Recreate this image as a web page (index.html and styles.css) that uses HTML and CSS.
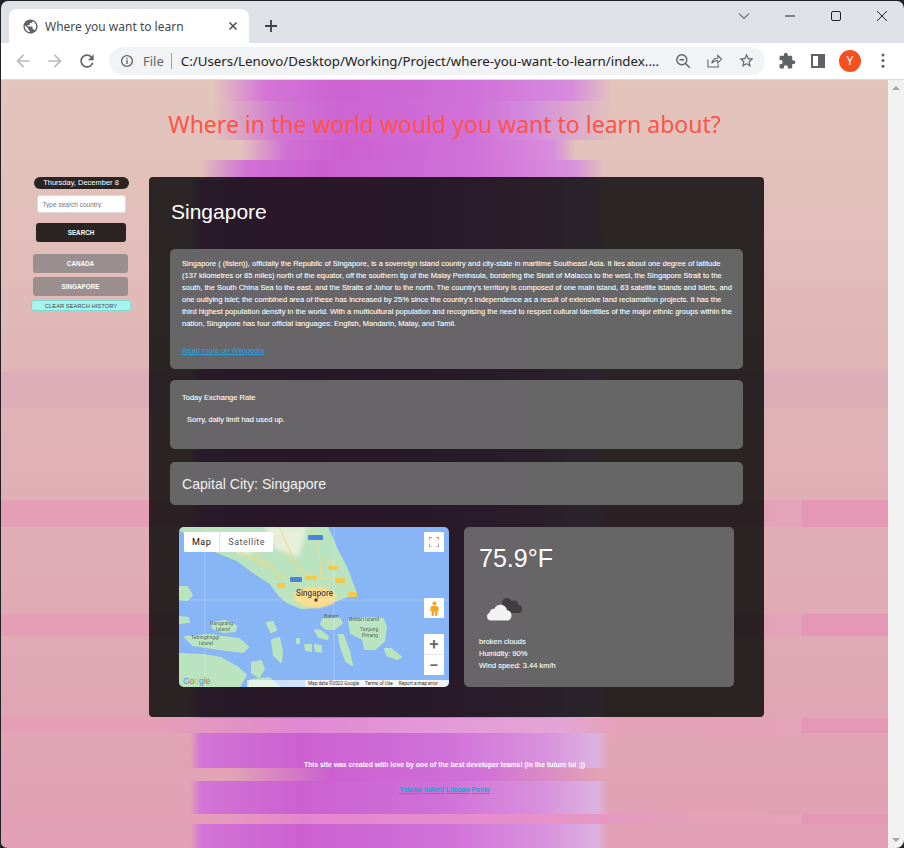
FILE: index.html
```html
<!DOCTYPE html>
<html lang="en">
<head>
    <meta charset="UTF-8">
    <meta name="viewport" content="width=device-width, initial-scale=1.0">
    <title>Where you want to learn</title>
    <link rel="stylesheet" href="styles.css">
</head>
<body>
<div class="window">

    <!-- browser chrome -->
    <div class="tabstrip">
        <div class="tab">
            <svg class="favicon" viewBox="0 0 24 24"><path d="M12 2C6.48 2 2 6.48 2 12s4.48 10 10 10 10-4.48 10-10S17.52 2 12 2zm-1 17.93c-3.95-.49-7-3.85-7-7.93 0-.62.08-1.21.21-1.79L9 15v1c0 1.1.9 2 2 2v1.93zm6.9-2.54c-.26-.81-1-1.39-1.9-1.39h-1v-3c0-.55-.45-1-1-1H8v-2h2c.55 0 1-.45 1-1V7h2c1.1 0 2-.9 2-2v-.41c2.93 1.19 5 4.06 5 7.41 0 2.08-.8 3.97-2.1 5.39z"/></svg>
            <span class="tab-title">Where you want to learn</span>
            <svg class="tab-close" viewBox="0 0 10 10"><path d="M1.5 1.5l7 7M8.5 1.5l-7 7"/></svg>
        </div>
        <svg class="new-tab" viewBox="0 0 12 12"><path d="M6 0v12M0 6h12"/></svg>
        <div class="window-buttons">
            <svg viewBox="0 0 12 12"><path d="M1 3.5l5 5 5-5"/></svg>
            <svg viewBox="0 0 12 12"><path d="M1 6h10"/></svg>
            <svg viewBox="0 0 12 12"><rect x="1.5" y="1.5" width="9" height="9" rx="1.5"/></svg>
            <svg viewBox="0 0 12 12"><path d="M1 1l10 10M11 1L1 11"/></svg>
        </div>
    </div>
    <div class="toolbar">
        <svg class="tool tool-off" viewBox="0 0 24 24"><path d="M20 11H7.83l5.59-5.59L12 4l-8 8 8 8 1.41-1.41L7.83 13H20v-2z"/></svg>
        <svg class="tool tool-off" viewBox="0 0 24 24"><path d="M12 4l-1.41 1.41L16.17 11H4v2h12.17l-5.58 5.59L12 20l8-8z"/></svg>
        <svg class="tool" viewBox="0 0 24 24"><path d="M17.65 6.35A7.958 7.958 0 0 0 12 4c-4.42 0-7.99 3.58-7.99 8s3.57 8 7.99 8c3.73 0 6.84-2.55 7.73-6h-2.08A5.99 5.99 0 0 1 12 18c-3.31 0-6-2.69-6-6s2.69-6 6-6c1.66 0 3.14.69 4.22 1.78L13 11h7V4l-2.35 2.35z"/></svg>
        <div class="omnibox">
            <svg class="omni-icon" viewBox="0 0 16 16"><circle cx="8" cy="8" r="6.2" fill="none" stroke="#5f6368" stroke-width="1.5"/><rect x="7.2" y="7" width="1.6" height="4.4"/><rect x="7.2" y="4.5" width="1.6" height="1.6"/></svg>
            <span class="omni-file">File</span>
            <span class="omni-sep"></span>
            <span class="omni-url">C:/Users/Lenovo/Desktop/Working/Project/where-you-want-to-learn/index....</span>
            <svg class="omni-icon omni-zoom" viewBox="0 0 16 16"><circle cx="6.8" cy="6.8" r="5" fill="none" stroke="#5f6368" stroke-width="1.4"/><path d="M10.5 10.5l4.3 4.3M4.5 6.8h4.6" fill="none" stroke="#5f6368" stroke-width="1.4"/></svg>
            <svg class="omni-icon omni-share" viewBox="0 0 16 16"><path d="M1 7v8h11v-3M5 11c.5-3.500 3-5.500 6.500-5.500V2.500l4 4.200-4 4V8C8.500 8 6.500 9 5 11z" fill="none" stroke="#5f6368" stroke-width="1.100"/></svg>
            <svg class="omni-icon omni-star" viewBox="0 0 24 24"><path d="M22 9.24l-7.19-.62L12 2 9.19 8.63 2 9.24l5.46 4.73L5.82 21 12 17.27 18.18 21l-1.63-7.03L22 9.24zM12 15.4l-3.76 2.27 1-4.28-3.32-2.88 4.38-.38L12 6.1l1.71 4.04 4.38.38-3.32 2.88 1 4.28L12 15.4z"/></svg>
        </div>
        <svg class="tool tool-puzzle" viewBox="0 0 24 24"><path d="M20.5 11H19V7c0-1.100-.9-2-2-2h-4V3.500C13 2.120 11.880 1 10.500 1S8 2.120 8 3.500V5H4c-1.100 0-1.990.9-1.990 2v3.800H3.500c1.490 0 2.700 1.210 2.700 2.700s-1.210 2.700-2.700 2.700H2V20c0 1.100.9 2 2 2h3.800v-1.500c0-1.490 1.210-2.700 2.700-2.700 1.490 0 2.700 1.210 2.700 2.700V22H17c1.100 0 2-.9 2-2v-4h1.500c1.380 0 2.500-1.120 2.500-2.500S21.880 11 20.500 11z"/></svg>
        <svg class="tool tool-panel" viewBox="0 0 14 14"><path fill-rule="evenodd" d="M0 0h14v14H0zM2 2v10h5V2z"/></svg>
        <span class="avatar">Y</span>
        <svg class="tool tool-menu" viewBox="0 0 4 16"><circle cx="2" cy="2" r="1.600"/><circle cx="2" cy="8" r="1.600"/><circle cx="2" cy="14" r="1.600"/></svg>
    </div>

    <div class="viewport">
        <div class="page">
            <h1 class="page-title">Where in the world would you want to learn about?</h1>

            <div class="layout">
                <aside class="sidebar">
                    <div class="date-pill">Thursday, December 8</div>
                    <input class="search-input" type="text" placeholder="Type search country:">
                    <button class="btn btn-search">SEARCH</button>
                    <button class="btn btn-history btn-canada">CANADA</button>
                    <button class="btn btn-history">SINGAPORE</button>
                    <button class="btn btn-clear">CLEAR SEARCH HISTORY</button>
                </aside>

                <main class="panel">
                    <h2 class="country-name">Singapore</h2>

                    <section class="card card-summary">
                        <p>Singapore ( (listen)), officially the Republic of Singapore, is a sovereign island country and city-state in maritime Southeast Asia. It lies about one degree of latitude (137 kilometres or 85 miles) north of the equator, off the southern tip of the Malay Peninsula, bordering the Strait of Malacca to the west, the Singapore Strait to the south, the South China Sea to the east, and the Straits of Johor to the north. The country's territory is composed of one main island, 63 satellite islands and islets, and one outlying islet; the combined area of these has increased by 25% since the country's independence as a result of extensive land reclamation projects. It has the third highest population density in the world. With a multicultural population and recognising the need to respect cultural identities of the major ethnic groups within the nation, Singapore has four official languages: English, Mandarin, Malay, and Tamil.</p>
                        <a class="wiki-link" href="#">Read more on Wikipedia</a>
                    </section>

                    <section class="card card-rate">
                        <div class="rate-title">Today Exchange Rate</div>
                        <div class="rate-text">Sorry, daily limit had used up.</div>
                    </section>

                    <section class="card card-capital">Capital City: Singapore</section>

                    <div class="info-row">
                        <div class="map">
                            <svg class="map-art" viewBox="0 0 270 160">
                                <rect width="270" height="160" fill="#87b5f6"/>
                                <g class="land">
                                    <path d="M0 0V2L6 6 20 15 38 25 58 33 74 45 91 56 100 68 108 75 122 81 140 80 158 73 177 66 171 50 165 36 158 23 148 0z"/>
                                    <path d="M0 60L8 60 13 68 8 73 0 72z"/>
                                    <path d="M0 90L9 91 10 95 0 96z"/>
                                    <path d="M33 96L46 94 57 99 56 104 44 105 34 101z"/>
                                    <path d="M6 110L30 108 60 112 69 120 64 125 40 122 14 118z"/>
                                    <path d="M0 127L24 128 42 131 58 140 67 148 60 160H0z"/>
                                    <path d="M73 136L82 134 85 142 80 150 73 146z"/>
                                    <path d="M72 153L90 151 100 160H70z"/>
                                    <path d="M88 96L94 95 97 103 92 105z"/>
                                    <path d="M93 113L100 111 103 124 102 135 95 128z"/>
                                    <path d="M126 118L132 118 132 124 127 123z"/>
                                    <path d="M136 118L142 119 142 125 137 124z"/>
                                    <path d="M136 103L142 104 149 110 148 112 140 110z"/>
                                    <path d="M160 108L164 108 170 124 173 138 167 134 162 120z"/>
                                    <path d="M144 92L160 91 163 96 155 102 147 102 142 97z"/>
                                    <path d="M170 94L186 91 204 92 207 100 205 114 196 122 186 122 184 112 172 106z"/>
                                    <path d="M206 122L212 122 222 130 218 132 208 128z"/>
                                    <path d="M118 112L120 112 120 116 118 116z"/>
                                </g>
                                <g class="urban">
                                    <path d="M30 6L60 8 76 28 60 26z"/>
                                    <path d="M86 0H128L120 30 96 22z"/>
                                </g>
                                <path d="M114 66L128 60 146 60 158 68 154 77 140 81 124 79 116 74z" fill="#fbdc8d" class="city-area"/>
                                <g class="roads">
                                    <path d="M26 0L44 14 66 28 90 36 108 52 122 60"/>
                                    <path d="M100 0L112 26 122 44 142 52 156 52 170 58"/>
                                    <path d="M66 28L98 46 104 62"/>
                                    <path d="M142 52L140 22 132 0"/>
                                    <path d="M142 30L160 40"/>
                                    <path d="M86 40L74 18M120 44L104 24"/>
                                </g>
                                <path d="M0 73H270M26 0V160M155 0V160" stroke="#fff" stroke-opacity=".35" stroke-width=".7"/>
                                <rect x="129" y="8" width="15" height="5" rx="1" fill="#4a86d8"/>
                                <rect x="111" y="50" width="12" height="5" rx="1" fill="#4a86d8"/>
                                <rect x="98" y="56" width="8" height="5" rx="1" fill="#f2c94c"/>
                                <rect x="156" y="51" width="10" height="5" rx="1" fill="#f2c94c"/>
                                <rect x="149" y="39" width="10" height="4" rx="1" fill="#f2c94c"/>
                                <rect x="169" y="65" width="9" height="5" rx="1" fill="#f2c94c"/>
                                <rect x="126" y="49" width="12" height="4" rx="1" fill="#f2c94c"/>
                                <g class="map-labels">
                                    <text class="map-city" x="117" y="69">Singapore</text>
                                    <text class="map-place" x="31" y="98">Rangsang</text>
                                    <text class="map-place" x="37" y="104">Island</text>
                                    <text class="map-place" x="12" y="112">Tebingtinggi</text>
                                    <text class="map-place" x="20" y="118">Island</text>
                                    <text class="map-place" x="145" y="91">Batam</text>
                                    <text class="map-place" x="170" y="94">Bintan Island</text>
                                    <text class="map-place" x="181" y="104">Tanjung</text>
                                    <text class="map-place" x="183" y="110">Pinang</text>
                                </g>
                                <circle cx="137" cy="73" r="1.800" fill="#444"/>
                            </svg>
                            <div class="map-type">
                                <span class="map-type-on">Map</span>
                                <span>Satellite</span>
                            </div>
                            <div class="map-btn map-full">
                                <svg viewBox="0 0 12 12"><path d="M0 3.500V0h3.500M8.500 0H12v3.500M12 8.500V12H8.500M3.500 12H0V8.500"/></svg>
                            </div>
                            <div class="map-btn map-peg">
                                <svg viewBox="0 0 10 16"><circle cx="5" cy="2.500" r="2.300"/><path d="M2 5.200h6l1.500 1.500v4.300H8.200V16H5.500v-4.500h-1V16H1.800v-5H.5V6.700z"/></svg>
                            </div>
                            <div class="map-zoom">
                                <span>+</span>
                                <span>−</span>
                            </div>
                            <div class="map-logo"><b class="g-blue">G</b><b class="g-red">o</b><b class="g-yellow">o</b><b class="g-blue">g</b><b class="g-green">l</b><b class="g-red">e</b></div>
                            <div class="map-attr">
                                <span class="attr-fill"></span>
                                <span class="attr-text">Map data ©2022 Google</span>
                                <span class="attr-text">Terms of Use</span>
                                <span class="attr-text">Report a map error</span>
                            </div>
                        </div>

                        <div class="card-weather">
                            <div class="temp">75.9°F</div>
                            <svg class="weather-icon" viewBox="0 0 36 24">
                                <g fill="#3f3d3e"><circle cx="20" cy="6" r="5"/><circle cx="27" cy="8" r="4.500"/><circle cx="31" cy="12" r="4"/><rect x="20" y="8" width="12" height="8"/></g>
                                <path fill="#f2f2f2" d="M4 23.500a4 4 0 0 1-1.500-7.700c.3-2.600 2.500-4.300 5-4 1-2.500 3-4 6-4 3.500 0 6 2.400 6.300 5.500 2.400 0 4.700 1.700 4.700 5.200 0 2.700-1.500 5-4 5z"/>
                            </svg>
                            <div class="weather-text">broken clouds</div>
                            <div class="weather-text">Humidity: 90%</div>
                            <div class="weather-text">Wind speed: 3.44 km/h</div>
                        </div>
                    </div>
                </main>
            </div>

            <footer class="site-footer">
                <p>This site was created with love by one of the best developer teams! (in the future lol ;))</p>
                <div class="team-links">
                    <a href="#">Yalzaw</a>
                    <a href="#">Valerii</a>
                    <a href="#">Liibaan</a>
                    <a href="#">Pavlo</a>
                </div>
            </footer>
        </div>

        <div class="scrollbar">
            <span class="arrow-up"></span>
            <span class="arrow-down"></span>
        </div>
    </div>
</div>
</body>
</html>
```

FILE: styles.css
```css
* {
    box-sizing: border-box;
}

html, body {
    margin: 0;
    padding: 0;
    height: 100%;
    overflow: hidden;
    background-color: #202124;
}

body {
    font-family: "Liberation Sans", Arial, sans-serif;
}

.window {
    width: 904px;
    height: 848px;
    padding-left: 1px;
    padding-top: 1px;
    display: flex;
    flex-direction: column;
    overflow: hidden;
    border-radius: 8px;
}

/* browser chrome */
.tabstrip {
    height: 42px;
    background-color: #dee1e6;
    display: flex;
    align-items: flex-end;
    padding-left: 8px;
    border-radius: 7px 7px 0 0;
    flex: none;
}

.tab {
    width: 240px;
    height: 34px;
    background-color: #fff;
    border-radius: 8px 8px 0 0;
    display: flex;
    align-items: center;
    padding: 0 11px 0 13px;
}

.favicon {
    width: 17px;
    height: 17px;
    fill: #5f6368;
    flex: none;
}

.tab-title {
    margin-left: 6px;
    flex: 1;
    font-family: "Noto Sans", sans-serif;
    font-size: 12px;
    color: #45494e;
}

.tab-close {
    width: 10px;
    height: 10px;
    fill: none;
    stroke: #4a4d51;
    stroke-width: 1.500;
}

.new-tab {
    width: 12px;
    height: 12px;
    margin: 0 0 11px 16px;
    fill: none;
    stroke: #3c4043;
    stroke-width: 1.800;
}

.window-buttons {
    margin-left: auto;
    align-self: flex-start;
    display: flex;
    gap: 34px;
    padding: 9px 16px 0 0;
}

.window-buttons svg {
    width: 12px;
    height: 12px;
    fill: none;
    stroke: #202124;
    stroke-width: 1;
}

.toolbar {
    height: 37px;
    background-color: #fff;
    border-bottom: 1px solid #dadce0;
    display: flex;
    align-items: center;
    padding: 0 0 1px 12px;
    flex: none;
}

.tool {
    width: 20px;
    height: 20px;
    fill: #5f6368;
    margin-right: 12px;
    flex: none;
}

.tool-off {
    fill: #babcbe;
}

.omnibox {
    width: 656px;
    height: 28px;
    border-radius: 14px;
    background-color: #f1f3f4;
    display: flex;
    align-items: center;
    padding-left: 11px;
    flex: none;
}

.omni-icon {
    width: 14px;
    height: 14px;
    fill: #5f6368;
    flex: none;
}

.omni-file {
    margin-left: 9px;
    font-family: "Noto Sans", sans-serif;
    font-size: 13px;
    color: #5f6368;
}

.omni-sep {
    width: 1px;
    height: 16px;
    margin: 0 9px 0 7px;
    background-color: #9aa0a6;
}

.omni-url {
    width: 488px;
    font-family: "Noto Sans", sans-serif;
    font-size: 13.300px;
    white-space: nowrap;
    color: #202124;
}

.omni-zoom {
    width: 16px;
    height: 16px;
    margin-left: 6px;
}

.omni-share {
    width: 15px;
    height: 15px;
    margin-left: 16px;
}

.omni-star {
    width: 17px;
    height: 17px;
    margin-left: 16px;
}

.tool-puzzle {
    margin: 0 0 0 13px;
    width: 18px;
    height: 18px;
}

.tool-panel {
    width: 14px;
    height: 14px;
    margin: 0 0 0 15px;
}

.avatar {
    width: 22px;
    height: 22px;
    margin-left: 14px;
    border-radius: 50%;
    background-color: #f4511e;
    color: #fff;
    font-family: "Noto Sans", sans-serif;
    font-size: 12px;
    line-height: 22px;
    text-align: center;
    flex: none;
}

.tool-menu {
    width: 4px;
    height: 15px;
    margin: 0 0 0 20px;
}

/* page */
.viewport {
    flex: 1;
    display: flex;
    min-height: 0;
}

.page {
    width: 887px;
    height: 768px;
    overflow: hidden;
    padding-top: 28px;
    --core: linear-gradient(90deg, rgba(207, 98, 210, 0) 189px, #d274d6 200px, #cc60d0 300px, #d070d8 440px, #d890dc 540px, #dcb2e0 596px, rgba(220, 178, 224, 0) 608px);
    --top-a: linear-gradient(90deg, rgba(207, 98, 210, 0) 212px, #d474d6 265px, #cc62d0 340px, #d070d8 470px, #d68cdc 570px, rgba(220, 190, 220, 0) 612px);
    --top-b: linear-gradient(90deg, rgba(207, 98, 210, 0) 212px, #d078d4 278px, #cc64d2 340px, #d070d8 470px, #d48edc 533px, rgba(220, 190, 220, 0) 612px);
    --top-c: linear-gradient(90deg, rgba(207, 98, 210, 0) 240px, #d070d4 285px, #cc60d0 340px, #d070d8 470px, #d88cdc 552px, rgba(220, 190, 220, 0) 575px);
    --top-d: linear-gradient(90deg, rgba(207, 98, 210, 0) 198px, #d070d4 246px, #cc60d0 320px, #d070d8 470px, #d890dc 572px, rgba(220, 190, 220, 0) 604px);
    --band: linear-gradient(90deg, #e59fb6 0, #e4a2b8 764px, #e2a4ba 800px, #e598b6 801px);
    background:
        var(--top-a) 0 0 / 100% 21px no-repeat,
        var(--top-b) 0 21px / 100% 39px no-repeat,
        var(--top-c) 0 60px / 100% 20px no-repeat,
        var(--top-d) 0 80px / 100% 20px no-repeat,
        var(--core) 0 100px / 100% 538px no-repeat,
        linear-gradient(90deg, rgba(224, 136, 208, 0) 150px, #e088d2 300px, #e498da 420px, #e4a4d4 560px, rgba(228, 160, 190, 0) 620px) 0 638px / 100% 15px no-repeat,
        var(--core) 0 653px / 100% 35px no-repeat,
        linear-gradient(90deg, rgba(207, 98, 210, 0) 230px, #cc60d0 330px, #d070d8 480px, rgba(220, 178, 224, 0) 600px) 0 688px / 100% 13px no-repeat,
        var(--core) 0 701px / 100% 33px no-repeat,
        linear-gradient(90deg, rgba(224, 136, 208, 0) 200px, #e486ce 300px, #e68ece 500px, rgba(228, 156, 184, 0) 700px) 0 734px / 100% 10px no-repeat,
        var(--core) 0 744px / 100% 24px no-repeat,
        var(--band) 0 420px / 100% 27px no-repeat,
        var(--band) 0 534px / 100% 22px no-repeat,
        var(--band) 0 638px / 100% 15px no-repeat,
        var(--band) 0 734px / 100% 10px no-repeat,
        linear-gradient(90deg, #deaeb8, #deaeb8) 0 292px / 100% 36px no-repeat,
        linear-gradient(180deg, #e3c5bc 0, #e2bfba 150px, #e0b4b6 300px, #e0aeb6 450px, #e0a6b4 620px, #e2a0b6 768px);
}

.page-title {
    margin: 0;
    text-align: center;
    font-family: "Noto Sans", sans-serif;
    font-weight: normal;
    font-size: 23px;
    line-height: 32px;
    color: #ff5349;
}

.layout {
    display: flex;
    align-items: flex-start;
    margin-top: 37px;
    padding-left: 30px;
}

.sidebar {
    width: 100px;
    display: flex;
    flex-direction: column;
    align-items: center;
}

.date-pill {
    width: 95px;
    height: 12px;
    border-radius: 6px;
    background-color: #2b2422;
    color: #fff;
    font-size: 7.500px;
    line-height: 12px;
    text-align: center;
}

.search-input {
    width: 89px;
    height: 18px;
    margin-top: 6px;
    padding: 0 5px;
    border: 1px solid #ddd;
    border-radius: 3px;
    background-color: #fff;
    font-family: "Liberation Sans", Arial, sans-serif;
    font-size: 6.500px;
    outline: none;
}

.search-input::placeholder {
    color: #777;
}

.btn {
    display: block;
    padding: 0;
    border: none;
    border-radius: 3px;
    font-family: "Liberation Sans", Arial, sans-serif;
    font-weight: bold;
    font-size: 6.300px;
    color: #fff;
    cursor: pointer;
}

.btn-search {
    width: 90px;
    height: 19px;
    margin-top: 10px;
    background-color: #2b2422;
}

.btn-history {
    width: 95px;
    height: 19px;
    margin-top: 4px;
    margin-right: 1px;
    background-color: #9a8e8e;
}

.btn-canada {
    margin-top: 12px;
}

.btn-clear {
    width: 100px;
    height: 11px;
    margin-top: 4px;
    background-color: #a6f5ee;
    border: 1px solid #7fd9d2;
    color: #3d4a4e;
    font-weight: normal;
    font-size: 5.800px;
    line-height: 8px;
}

.panel {
    width: 615px;
    height: 540px;
    margin-left: 18px;
    padding: 24px 21px 0 21px;
    border-radius: 4px;
    background-color: rgba(10, 10, 10, 0.85);
    color: #fff;
}

.country-name {
    margin: 0 0 0 1px;
    font-weight: normal;
    font-size: 21px;
    line-height: 22px;
}

.card {
    border-radius: 5px;
    background-color: rgba(110, 110, 110, 0.9);
}

.card-summary {
    height: 120px;
    margin-top: 26px;
    padding: 9px 8px 0 12px;
    font-size: 7.500px;
    line-height: 12px;
    -webkit-text-stroke: .08px #fff;
}

.card-summary p {
    margin: 0;
}

.wiki-link {
    display: inline-block;
    margin-top: 15px;
    color: #2ea3da;
    -webkit-text-stroke: 0;
}

.card-rate {
    height: 69px;
    margin-top: 11px;
    padding: 12px 12px 0 12px;
    font-size: 7.500px;
    line-height: 12px;
    -webkit-text-stroke: .08px #fff;
}

.rate-text {
    margin: 10px 0 0 5px;
}

.card-capital {
    height: 43px;
    margin-top: 13px;
    padding-left: 12px;
    font-size: 14.100px;
    line-height: 44px;
    color: #f0f0f0;
}

.info-row {
    display: flex;
    gap: 15px;
    margin: 22px 0 0 9px;
}

/* map */
.map {
    position: relative;
    width: 270px;
    height: 160px;
    overflow: hidden;
    border-radius: 5px;
}

.map-art {
    display: block;
    width: 270px;
    height: 160px;
}

.land {
    fill: #b9e4bf;
    stroke: #b9e4bf;
    stroke-width: 2;
    stroke-linejoin: round;
    filter: blur(.7px);
}

.urban {
    fill: #e6efd8;
    filter: blur(2px);
}

.city-area {
    filter: blur(.8px);
}

.roads {
    fill: none;
    stroke: #f6d77e;
    stroke-width: 1;
    filter: blur(.35px);
}

.map-labels {
    filter: blur(.25px);
}

.map-city {
    font-family: Roboto, sans-serif;
    font-size: 8.200px;
    font-weight: 500;
    fill: #4a4a4a;
}

.map-place {
    font-family: Roboto, sans-serif;
    font-size: 5.200px;
    fill: #5c6b60;
}

.map-type {
    position: absolute;
    top: 5px;
    left: 5px;
    height: 20px;
    display: flex;
    align-items: center;
    border-radius: 1px;
    background-color: #fff;
    font-family: Roboto, sans-serif;
    font-size: 9px;
    letter-spacing: .5px;
    color: #565656;
}

.map-type span {
    padding: 0 8px;
    line-height: 20px;
}

.map-type-on {
    color: #111;
    border-right: 1px solid #e6e6e6;
}

.map-btn {
    position: absolute;
    left: 245px;
    width: 20px;
    height: 20px;
    background-color: #fff;
    border-radius: 1px;
    display: flex;
    align-items: center;
    justify-content: center;
}

.map-full {
    top: 5px;
}

.map-full svg {
    width: 10px;
    height: 10px;
    fill: none;
    stroke: #888;
    stroke-width: 1.500;
}

.map-peg {
    top: 71px;
}

.map-peg svg {
    width: 9px;
    height: 15px;
    fill: #f5a623;
}

.map-zoom {
    position: absolute;
    top: 107px;
    left: 245px;
    width: 20px;
    height: 41px;
    background-color: #fff;
    border-radius: 1px;
    display: flex;
    flex-direction: column;
    font-family: Roboto, sans-serif;
    font-size: 17px;
    font-weight: 500;
    color: #666;
    text-align: center;
}

.map-zoom span {
    height: 20px;
    line-height: 20px;
}

.map-zoom span:first-child {
    height: 21px;
    border-bottom: 1px solid #e6e6e6;
}

.map-logo {
    position: absolute;
    left: 4px;
    bottom: 1px;
    font-family: "Liberation Sans", sans-serif;
    font-size: 8.500px;
    line-height: 10px;
}

.g-blue { color: #4f8ef0; font-weight: normal; }
.g-red { color: #e2574c; font-weight: normal; }
.g-yellow { color: #e8b93a; font-weight: normal; }
.g-green { color: #4fb062; font-weight: normal; }

.map-attr {
    position: absolute;
    left: 68px;
    right: 0;
    bottom: 0;
    height: 7px;
    display: flex;
    font-family: Roboto, sans-serif;
    font-size: 4.700px;
    line-height: 7px;
    color: #333;
}

.attr-fill {
    width: 58px;
    background-color: rgba(255, 255, 255, 0.6);
}

.attr-text {
    background-color: #f4f4f4;
    padding: 0 3px;
    white-space: nowrap;
}

.attr-text:last-child {
    flex: 1;
}

/* weather */
.card-weather {
    width: 270px;
    height: 160px;
    padding: 17px 15px 0 15px;
    border-radius: 5px;
    background-color: rgba(110, 110, 110, 0.9);
}

.temp {
    font-size: 25px;
    line-height: 28px;
}

.weather-icon {
    display: block;
    width: 36px;
    height: 24px;
    margin: 25px 0 0 8px;
}

.weather-text {
    font-size: 7.500px;
    line-height: 12px;
    -webkit-text-stroke: .08px #fff;
}

.weather-icon + .weather-text {
    margin-top: 15px;
}

/* footer */
.site-footer {
    margin-top: 43px;
    text-align: center;
    font-weight: bold;
    font-size: 6.850px;
    color: #fff;
}

.site-footer p {
    margin: 0;
    line-height: 10px;
}

.team-links {
    margin-top: 15px;
    line-height: 10px;
}

.team-links a {
    color: #12a5d8;
}

/* scrollbar */
.scrollbar {
    width: 16px;
    height: 768px;
    background-color: #f1f1f1;
    display: flex;
    flex-direction: column;
    justify-content: space-between;
    align-items: center;
    padding: 6px 0;
}

.arrow-up {
    border: 4px solid transparent;
    border-top: none;
    border-bottom: 4px solid #a3a3a3;
}

.arrow-down {
    border: 4px solid transparent;
    border-bottom: none;
    border-top: 4px solid #a3a3a3;
}
```
